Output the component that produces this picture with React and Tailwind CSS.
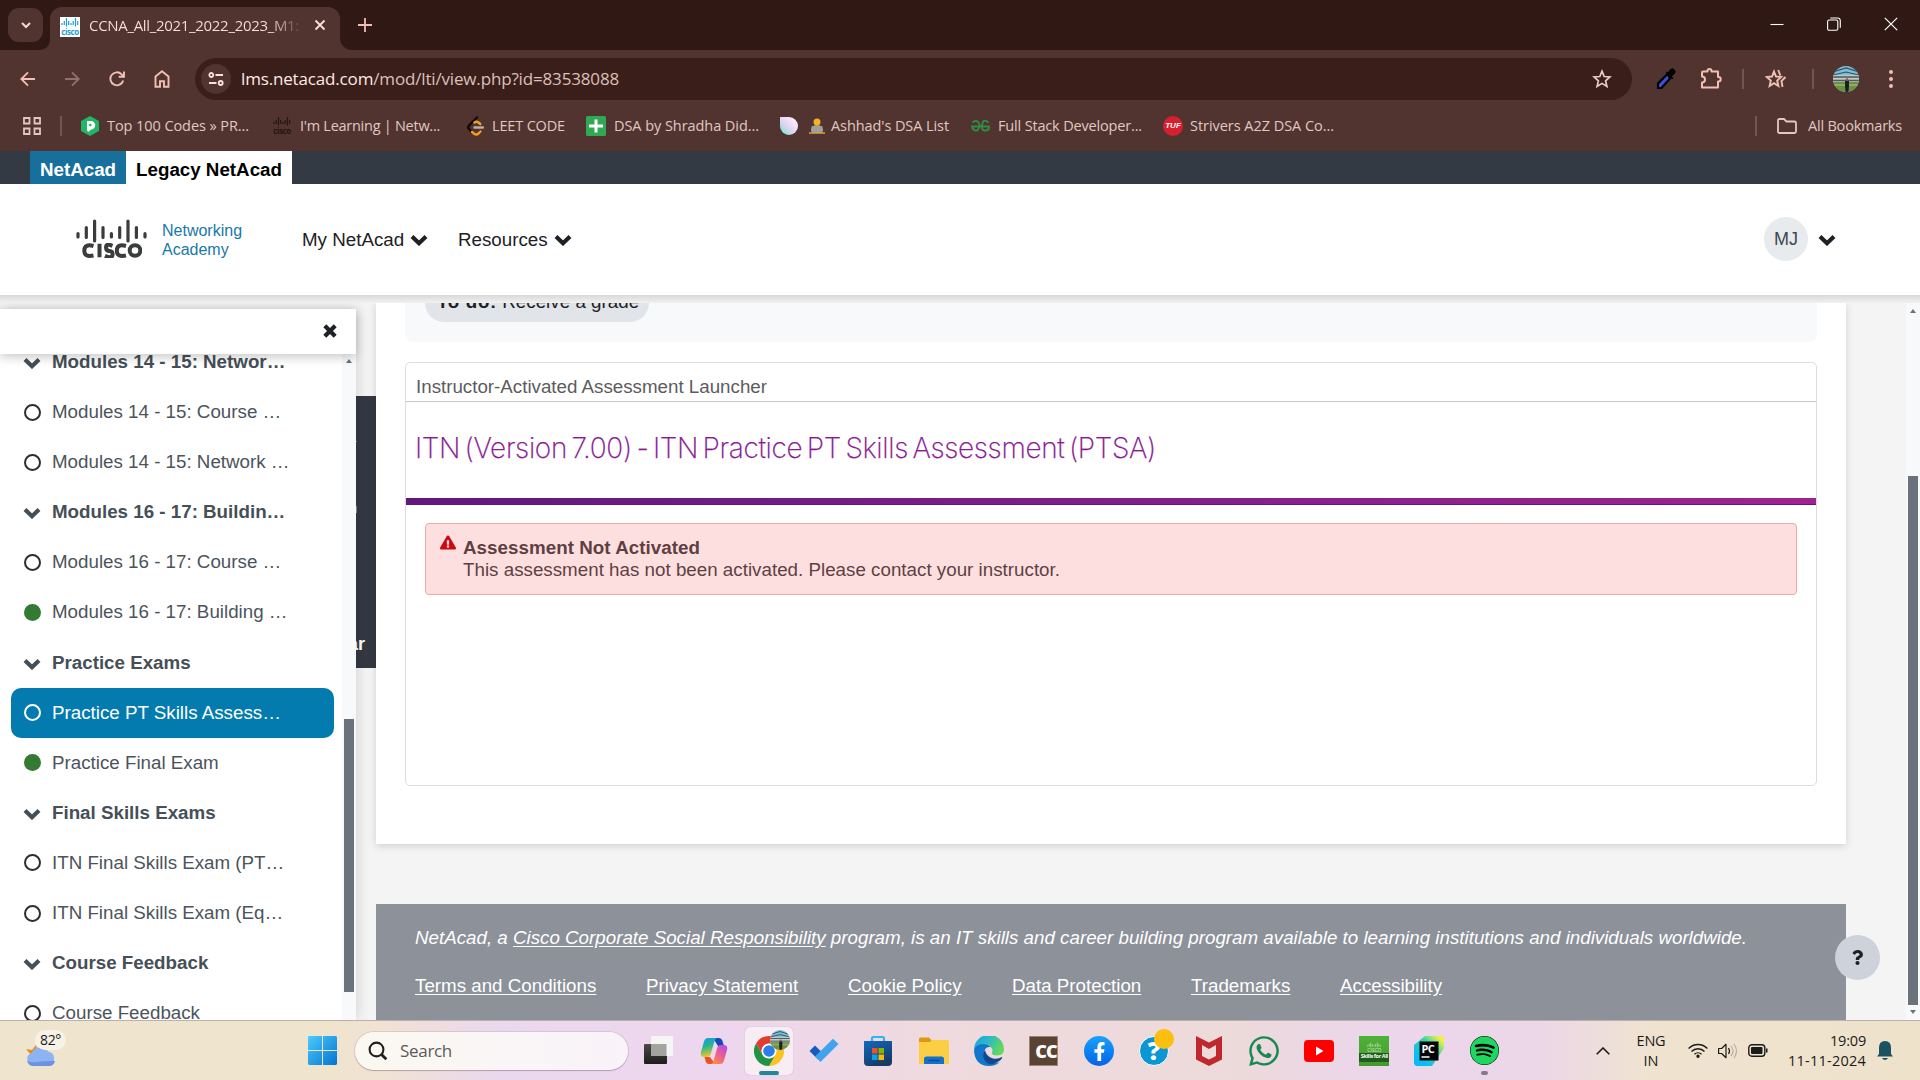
import React, { useLayoutEffect, useRef, useState } from "react";
import { FaExclamationTriangle, FaWhatsapp, FaQuestion, FaSpotify, FaFacebookF } from "react-icons/fa";

/* Single line of text whose letter spacing is computed so that it fills `width` pixels. */
function Fit({ width, className = "", children }) {
  const ref = useRef(null);
  const [spacing, setSpacing] = useState(0);
  useLayoutEffect(() => {
    const natural = ref.current.getBoundingClientRect().width;
    setSpacing((width - natural) / ref.current.textContent.length);
  }, [width]);
  return (
    <span ref={ref} className={`inline-block whitespace-nowrap ${className}`} style={{ letterSpacing: spacing }}>
      {children}
    </span>
  );
}

const Chevron = ({ className }) => (
  <svg viewBox="0 0 18 12" className={`h-3 w-[18px] shrink-0 ${className}`} fill="none" stroke="currentColor" strokeWidth="4.200"><path d="M2 2.500l7 6.700 7-6.700" /></svg>
);

const Cross = ({ className }) => (
  <svg viewBox="0 0 14 14" className={`h-[14px] w-[14px] ${className}`} fill="none" stroke="currentColor" strokeWidth="4.200"><path d="M1.800 1.800l10.400 10.400M12.200 1.800L1.800 12.200" /></svg>
);

const Bars = ({ className }) => (
  <svg viewBox="0 0 71 24" className={className} stroke="currentColor" strokeWidth="3.200" strokeLinecap="round" fill="none">
    <path d="M2 14.500v3.500M10.300 8.500v10M18.600 2v20M27 8.500v10M35.400 14.500v3.500M43.700 8.500v10M52 2v20M60.400 8.500v10M69 14.500v3.500" />
  </svg>
);

const CiscoMini = ({ className }) => (
  <div className={`flex flex-col items-center justify-center ${className}`}>
    <svg viewBox="0 0 18 9" className="h-[9px] w-[18px]" stroke="currentColor" strokeWidth="1.200"><path d="M1 5v2M3.300 3v4M5.500 0v8.500M7.700 3v4M10 5v2M12.200 3v4M14.500 0v8.500M16.700 3v4" /></svg>
    <span className="font-['Open_Sans',sans-serif] text-[8px] font-bold leading-[9px] tracking-[-0.4px]">cisco</span>
  </div>
);

const Photo = ({ className }) => (
  <svg viewBox="0 0 26 26" className={className}>
    <defs><clipPath id="round"><circle cx="13" cy="13" r="13" /></clipPath></defs>
    <g clipPath="url(#round)">
      <rect width="26" height="26" fill="#7fbcd6" />
      <path d="M0 6L13 2 26 6M0 9L13 6 26 9" stroke="#2f5563" strokeWidth="1.200" fill="none" />
      <rect y="9" width="26" height="7" fill="#c3c9c8" />
      <path d="M0 11h26M0 14.500h26" stroke="#4c5a58" strokeWidth="1.300" />
      <rect y="16" width="26" height="10" fill="#6f8f45" />
      <path d="M0 19h26" stroke="#8fae5c" strokeWidth="2" />
      <circle cx="14" cy="13.500" r="1.300" fill="#8f5f45" />
      <path d="M12 15h4v5l-.6 6h-2.800l-.6-6z" fill="#1b1d22" />
    </g>
  </svg>
);

function TabStrip() {
  return (
    <div className="flex h-[50px] items-end bg-[#301914] pl-2">
      <div className="mb-2 flex h-[34px] w-[35px] items-center justify-center rounded-[11px] bg-[#51342f] text-[#f7dad3]">
        <svg viewBox="0 0 12 12" className="h-3 w-3" fill="none" stroke="currentColor" strokeWidth="2"><path d="M2 4l4 4 4-4" /></svg>
      </div>
      <svg viewBox="0 0 10 10" className="-ml-[3px] h-[10px] w-[10px] text-[#51342f]" fill="currentColor"><path d="M10 0v10H0A10 10 0 0 0 10 0z" /></svg>
      <div className="flex h-[43px] w-[290px] items-center rounded-t-[12px] bg-[#51342f] pl-[10px] pb-[7px]">
        <div className="mt-[3px] h-5 w-5 bg-white text-[#1ba0d7]"><CiscoMini className="h-5 w-5" /></div>
        <div className="ml-[9px] w-[213px] overflow-hidden bg-linear-to-r from-[#f9e1dc] from-85% to-[#5b3e39] to-100% bg-clip-text font-['Open_Sans',sans-serif] text-[15px] leading-5 text-transparent">
          <Fit width={210}>CCNA_All_2021_2022_2023_M1:</Fit>
        </div>
        <svg viewBox="0 0 12 12" className="ml-[12px] h-3 w-3 text-[#f9e1dc]" fill="none" stroke="currentColor" strokeWidth="1.800"><path d="M1.500 1.500l9 9M10.500 1.500l-9 9" /></svg>
      </div>
      <svg viewBox="0 0 12 12" className="h-3 w-3 text-[#51342f]" fill="currentColor"><path d="M0 0v12h12A12 12 0 0 1 0 0z" /></svg>
      <svg viewBox="0 0 14 14" className="mb-[18px] ml-[6px] h-[14px] w-[14px] text-[#f2bfb4]" fill="none" stroke="currentColor" strokeWidth="1.800"><path d="M7 0v14M0 7h14" /></svg>
      <div className="mb-[19px] ml-auto mr-[22px] flex items-center gap-[43px] text-white">
        <svg viewBox="0 0 14 14" className="h-[14px] w-[14px]" stroke="currentColor" strokeWidth="1.100"><path d="M.5 7.500h13" /></svg>
        <svg viewBox="0 0 14 14" className="h-[14px] w-[14px]" fill="none" stroke="currentColor" strokeWidth="1.100"><rect x=".6" y="3" width="10.200" height="10.300" rx="1.500" /><path d="M3.300 1h7.200a2.800 2.800 0 0 1 2.800 2.800v7" /></svg>
        <svg viewBox="0 0 14 14" className="h-[14px] w-[14px]" fill="none" stroke="currentColor" strokeWidth="1.200"><path d="M.8.8l12.400 12.400M13.200.8L.8 13.200" /></svg>
      </div>
    </div>
  );
}

const Star = ({ className }) => (
  <svg viewBox="0 0 20 20" className={className} fill="none" stroke="currentColor" strokeWidth="1.700"><path d="M10 2.200l2.200 5.300 5.700.5-4.300 3.800 1.300 5.600L10 14.400l-4.900 3 1.300-5.600L2.100 8l5.700-.5z" /></svg>
);

function Toolbar() {
  return (
    <div className="flex h-[58px] items-center bg-[#51342f] text-[#f2bfb4]">
      <svg viewBox="0 0 16 16" className="ml-5 h-4 w-4" fill="none" stroke="currentColor" strokeWidth="1.800"><path d="M15 8H1.500M8 1.300L1.300 8 8 14.700" /></svg>
      <svg viewBox="0 0 16 16" className="ml-[28px] h-4 w-4 text-[#92716a]" fill="none" stroke="currentColor" strokeWidth="1.800"><path d="M1 8h13.500M8 1.300L14.700 8 8 14.700" /></svg>
      <svg viewBox="0 0 16 16" className="ml-[29px] h-4 w-4" fill="none" stroke="currentColor" strokeWidth="1.900"><path d="M14.200 9.500A6.500 6.500 0 1 1 12.600 3.300L14.500 5.200M15 .5v5.300H9.700" /></svg>
      <svg viewBox="0 0 16 18" className="ml-[29px] h-[18px] w-4" fill="none" stroke="currentColor" strokeWidth="1.900"><path d="M1.500 6.500L8 1.300l6.500 5.200v10.300H10v-5.500H6v5.500H1.500z" /></svg>
      <div className="ml-[25px] flex h-[42px] w-[1437px] items-center rounded-full bg-[#3a1e1a] pl-[6px]">
        <div className="flex h-[30px] w-[30px] items-center justify-center rounded-full bg-[#51342f] text-[#f9e1dc]">
          <svg viewBox="0 0 16 16" className="h-4 w-4" fill="none" stroke="currentColor" strokeWidth="1.800"><circle cx="3.300" cy="4" r="2" /><path d="M7.500 4H15M1 12h7.500" /><circle cx="12.700" cy="12" r="2" /></svg>
        </div>
        <div className="ml-[10px] w-[1351px] font-['Open_Sans',sans-serif] text-[17px] leading-6 text-[#dcc0b9]">
          <Fit width={378}><span className="text-[#fdeae6]">lms.netacad.com</span>/mod/lti/view.php?id=83538088</Fit>
        </div>
        <Star className="h-5 w-5 shrink-0 text-[#e6cdc7]" />
      </div>
      <svg viewBox="0 0 20 22" className="ml-6 h-[22px] w-5"><path d="M2 20v-4.500L11.500 6l3.500 3.500L5.500 20z" fill="#3b50d8" stroke="#000" strokeWidth="2.200" /><path d="M10 4l2 1.200 2.500-3.700q2.500-1.500 4 .5t-.5 4L15.500 8.500 17 11z" fill="#000" stroke="#000" /><path d="M10.500 6l2.500 5 2-2z" fill="#000" /></svg>
      <svg viewBox="0 0 22 22" className="ml-[24px] h-[22px] w-[22px]" fill="none" stroke="currentColor" strokeWidth="2"><path d="M3 3.500h4.500V3a2 2 0 0 1 4 0v.5H18V9h.5a2.200 2.200 0 0 1 0 4.400H18v6.100H2v-5a3 3 0 0 0 0-6v-4q0-1 1-1z" strokeLinejoin="round" /></svg>
      <div className="ml-[20px] h-5 w-[2px] bg-[#76534c]" />
      <svg viewBox="0 0 22 20" className="ml-[21px] h-5 w-[22px]" fill="none" stroke="currentColor" strokeWidth="1.900"><path d="M9 2.500l2 5 5.200.5-4 3.500 1.200 5.500L9 14.200 4.600 17l1.200-5.500-4-3.500L7 7.500zM13.200 1l2.200 5.500M20.500 8l-4 4 1 6" /></svg>
      <div className="ml-[25px] h-5 w-[2px] bg-[#76534c]" />
      <Photo className="ml-[19px] h-[26px] w-[26px]" />
      <div className="ml-[30px] flex flex-col gap-[3px]"><i className="h-1 w-1 rounded-full bg-[#f2bfb4]" /><i className="h-1 w-1 rounded-full bg-[#f2bfb4]" /><i className="h-1 w-1 rounded-full bg-[#f2bfb4]" /></div>
    </div>
  );
}

const Bookmark = ({ icon, text, width, className }) => (
  <div className={`flex shrink-0 items-center ${className}`}>
    {icon}
    <Fit width={width}>{text}</Fit>
  </div>
);

function Bookmarks() {
  return (
    <div className="flex h-[43px] items-center bg-[#51342f] pb-[8px] font-['Open_Sans',sans-serif] text-[14.5px] leading-5 text-[#e0c8c2]">
      <svg viewBox="0 0 18 18" className="ml-[23px] mr-[19px] h-[18px] w-[18px]" fill="none" stroke="currentColor" strokeWidth="1.800"><path d="M1 1h5.500v5.500H1zM11.500 1H17v5.500h-5.500zM1 11.500h5.500V17H1zM11.500 11.500H17V17h-5.500z" /></svg>
      <div className="h-5 w-[2px] bg-[#76534c]" />
      <Bookmark className="ml-[19px] w-[191px] gap-[8px]" width={142} text="Top 100 Codes » PR..." icon={
        <svg viewBox="0 0 18 20" className="h-5 w-[18px]"><path d="M9 0l9 5v10l-9 5-9-5V5z" fill="#22b565" /><path d="M6 5h4a4 4 0 0 1 0 8.500L7.500 16 6 14.500z" fill="#fff" /><circle cx="9.300" cy="9" r="1.300" fill="#22b565" /></svg>} />
      <Bookmark className="w-[195px] gap-2" width={140} text="I'm Learning | Netw..." icon={<CiscoMini className="h-5 w-5 text-[#241512]" />} />
      <Bookmark className="w-[119px] gap-2" width={73} text="LEET CODE" icon={
        <svg viewBox="0 0 17 20" className="h-5 w-[17px]" fill="none" strokeWidth="2.400" strokeLinecap="round"><path d="M10 1.500L2 9.500q-1.500 1.700 0 3.500l3 3.500" stroke="#100a09" /><path d="M5 16l2.500 2q2 1.300 4-.5l2-2M7.500 6.500q2-1.500 4 0l1.800 1.500" stroke="#f5a11a" /><path d="M7.500 11.500H16" stroke="#b9b1ae" /></svg>} />
      <Bookmark className="w-[194px] gap-2" width={145} text="DSA by Shradha Did..." icon={
        <svg viewBox="0 0 20 20" className="h-5 w-5"><rect width="20" height="20" rx="1.500" fill="#31a853" /><path d="M8.500 3.500h3v5H17v3h-5.500v5h-3v-5H3v-3h5.500z" fill="#fff" /></svg>} />
      <Bookmark className="w-[191px]" width={118} text="Ashhad's DSA List" icon={
        <>
          <div className="h-[18px] w-[18px] rounded-full rounded-tl-none bg-linear-to-tr from-[#55e0cc] via-[#e9d5f5] to-white" />
          <svg viewBox="0 0 16 16" className="ml-[11px] mr-[6px] h-4 w-4"><circle cx="8" cy="4" r="3.500" fill="#f3b125" /><path d="M2 13q0-6 6-6t6 6z" fill="#e8a33a" /><rect x="2.500" y="8" width="11" height="7" rx="1" fill="#9aa1a6" /><path d="M0 15h16" stroke="#d8a03c" strokeWidth="1.500" /></svg>
        </>} />
      <Bookmark className="w-[192px] gap-[8px]" width={144} text="Full Stack Developer..." icon={
        <svg viewBox="0 0 19 12" className="h-3 w-[19px]" fill="none" stroke="#2f8d46" strokeWidth="1.800"><path d="M1.500 2.500Q4.500-.5 7 2t1 6-4 2.500T1 6.500h17Q18.500 10 15 10.500T11 8t1-6 5.500.5" /></svg>} />
      <Bookmark className="gap-[7px]" width={144} text="Strivers A2Z DSA Co..." icon={
        <div className="flex h-5 w-5 items-center justify-center rounded-full bg-[#d6202f] font-['Liberation_Sans',sans-serif] text-[8px] font-bold italic text-white">TUF</div>} />
      <div className="ml-auto h-5 w-[2px] bg-[#76534c]" />
      <svg viewBox="0 0 20 16" className="ml-5 mr-[11px] h-4 w-5" fill="none" stroke="currentColor" strokeWidth="1.800"><path d="M1 13.500v-11Q1 1 2.500 1H7l2.500 2.500h8Q19 3.500 19 5v8.500q0 1.500-1.500 1.500h-15Q1 15 1 13.500z" /></svg>
      <Fit width={94} className="mr-[18px]">All Bookmarks</Fit>
    </div>
  );
}

function SiteHeader() {
  return (
    <>
      <div className="flex h-[33px] items-center bg-[#343a43] pl-[30px] text-[18.75px] font-bold leading-[33px]">
        <div className="h-[33px] w-[96px] bg-[#176f9c] pt-[2px] text-center text-white">NetAcad</div>
        <div className="h-[33px] w-[166px] bg-white pt-[2px] text-center text-black">Legacy NetAcad</div>
      </div>
      <div className="flex h-[111px] items-center bg-white text-[#1d2125]">
        <div className="-mt-[2px] ml-[76px] flex w-[71px] flex-col items-center text-[#3b3c3d]">
          <Bars className="h-6 w-[71px]" />
          <svg viewBox="0 0 60 15" className="h-[15px] w-[60px]" fill="none" stroke="currentColor" strokeWidth="4">
            <path d="M11.500 3Q2.500.5 2.300 7.500T11.500 12.500M17.500.8v13.400M30.500 2.800Q24-.0 24 4t3.500 4 3 4-7.500.8M44 3Q35 .5 34.800 7.500T44 12.500" />
            <circle cx="53" cy="7.500" r="5.300" />
          </svg>
        </div>
        <div className="ml-[15px] w-[140px] text-[16px] leading-[19px] text-[#1878a8]"><div>Networking</div><div>Academy</div></div>
        <div className="flex w-[156px] items-center text-[18.75px] leading-7"><span>My NetAcad</span><Chevron className="ml-[6px]" /></div>
        <div className="flex items-center text-[18.75px] leading-7"><span>Resources</span><Chevron className="ml-[6px]" /></div>
        <div className="-mt-[1px] ml-auto flex h-11 w-11 items-center justify-center rounded-full bg-[#e7ebee] text-[18px] text-[#3f474e]">MJ</div>
        <Chevron className="ml-[10px] mr-[84px]" />
      </div>
    </>
  );
}

const ROWS = [
  ["head", "Modules 14 - 15: Networ…"],
  ["open", "Modules 14 - 15: Course …"],
  ["open", "Modules 14 - 15: Network …"],
  ["head", "Modules 16 - 17: Buildin…"],
  ["open", "Modules 16 - 17: Course …"],
  ["done", "Modules 16 - 17: Building …"],
  ["head", "Practice Exams"],
  ["active", "Practice PT Skills Assess…"],
  ["done", "Practice Final Exam"],
  ["head", "Final Skills Exams"],
  ["open", "ITN Final Skills Exam (PT…"],
  ["open", "ITN Final Skills Exam (Eq…"],
  ["head", "Course Feedback"],
  ["open", "Course Feedback"],
];

function Row({ kind, text }) {
  const tone = kind === "active" ? "bg-[#037bae] text-white" : kind === "head" ? "font-bold text-[#464f57]" : "text-[#4b545c]";
  return (
    <div className={`ml-[11px] flex h-[50.1px] w-[323px] items-center rounded-[10px] pl-[12px] text-[18.75px] ${tone}`}>
      <span className="flex w-[29px] items-center">
        {kind === "head" && <Chevron className="mt-[2px]" />}
        {kind === "open" && <i className="ml-[0.5px] h-[17px] w-[17px] rounded-full border-2 border-[#2b2f34]" />}
        {kind === "active" && <i className="ml-[0.5px] h-[17px] w-[17px] rounded-full border-2 border-white" />}
        {kind === "done" && <i className="ml-[0.5px] h-[17px] w-[17px] rounded-full bg-[#357a32]" />}
      </span>
      <span className="whitespace-nowrap">{text}</span>
    </div>
  );
}

const Arrow = ({ down }) => (
  <svg viewBox="0 0 6 4" className={`h-1 w-[6px] ${down ? "rotate-180" : ""}`} fill="#6a737b"><path d="M3 0l3 4H0z" /></svg>
);

function Sidebar() {
  return (
    <div className="relative z-10 mt-[6px] flex h-[711px] w-[356px] shrink-0 flex-col bg-white shadow-[2px_0_12px_rgba(0,0,0,0.12)]">
      <div className="relative z-10 flex h-[45px] shrink-0 items-center justify-end bg-white pr-[19px] text-[#1d2125] shadow-[0_3px_10px_rgba(0,0,0,0.22)]">
        <Cross className="-mt-[2px]" />
      </div>
      <div className="flex h-[666px] overflow-hidden">
        <div className="-mt-[17px] w-[342px] shrink-0">
          {ROWS.map(([kind, text], i) => <Row key={i} kind={kind} text={text} />)}
        </div>
        <div className="flex w-[14px] flex-col items-center bg-[#f8f9fb] pt-[5px]">
          <Arrow />
          <div className="mt-[356px] h-[273px] w-[10px] bg-[#6a737b]" />
        </div>
      </div>
    </div>
  );
}

function Launcher() {
  return (
    <div className="mt-[20px] h-[424px] rounded-[5px] border border-[#dcdee1] bg-white">
      <div className="h-[39px] border-b border-[#c8c8c8] pl-[10px] pt-[11px] text-[18.75px] leading-[26px] text-[#5c5c5e]"><Fit width={351}>Instructor-Activated Assessment Launcher</Fit></div>
      <div className="h-[96px] pl-[9px] pt-[27px] font-['Inter',sans-serif] text-[28px] font-extralight leading-[38px] text-[#8b1a90]">
        <Fit width={741} className="[word-spacing:-3px] [-webkit-text-stroke:0.25px_#8b1a90]">ITN (Version 7.00) - ITN Practice PT Skills Assessment (PTSA)</Fit>
      </div>
      <div className="h-[7px] border-b border-[#62187f] bg-linear-to-r from-[#62187f] to-[#9f2294]" />
      <div className="mx-[19px] mt-[18px] flex h-[72px] rounded-[4px] border border-[#f0a9a3] bg-[#fddfe0] pl-[14px] pt-[11px] text-[#5f3f42]">
        <FaExclamationTriangle className="h-[15px] w-4 text-[#cf0a0f]" />
        <div className="ml-[7px] mt-[2px] text-[18.75px] leading-[22px]">
          <div className="font-bold"><Fit width={237}>Assessment Not Activated</Fit></div>
          <div><Fit width={597}>This assessment has not been activated. Please contact your instructor.</Fit></div>
        </div>
      </div>
    </div>
  );
}

const LINKS = [
  ["Terms and Conditions", "w-[231px]"],
  ["Privacy Statement", "w-[202px]"],
  ["Cookie Policy", "w-[164px]"],
  ["Data Protection", "w-[179px]"],
  ["Trademarks", "w-[149px]"],
  ["Accessibility", "w-[140px]"],
];

function Content() {
  return (
    <div className="flex w-[1470px] shrink-0 flex-col">
      <div className="h-[541px] shrink-0 overflow-hidden bg-white px-[29px] shadow-[0_2px_8px_rgba(0,0,0,0.15)]">
        <div className="flex h-[39px] flex-col items-start justify-end rounded-b-[8px] bg-[#f8f9fb] pb-5 pl-5">
          <div className="flex h-[19px] w-[224px] items-end overflow-hidden rounded-b-[19px] bg-[#e1e4e9] pb-[8px] pl-[12px] text-[18.75px] leading-6 text-[#1d2125]">
            <span className="whitespace-nowrap"><b><Fit width={60}>To do:</Fit></b> <Fit width={137}>Receive a grade</Fit></span>
          </div>
        </div>
        <Launcher />
      </div>
      <div className="mt-[60px] h-[116px] bg-[#8d9199] pl-[39px] pt-[21px] text-[18.75px] leading-[26px] text-white">
        <div className="italic"><Fit width={1332}>NetAcad, a <span className="underline underline-offset-2">Cisco Corporate Social Responsibility</span> program, is an IT skills and career building program available to learning institutions and individuals worldwide.</Fit></div>
        <div className="mt-[22px] flex">{LINKS.map(([t, w]) => <span key={t} className={`whitespace-nowrap ${w}`}><span className="underline underline-offset-2">{t}</span></span>)}</div>
      </div>
    </div>
  );
}

const TaskView = () => (<svg viewBox="0 0 32 32" className="mb-[2px] mr-[2px] h-8 w-8"><defs><linearGradient id="tv" x2="0" y2="1"><stop stopColor="#4a4a48" /><stop offset="1" stopColor="#1d1d1c" /></linearGradient></defs><rect x="2" y="10" width="23" height="20" rx="1" fill="url(#tv)" /><rect x="9" y="2" width="22" height="20" rx="1" fill="#f5f5f5" /><path d="M9 10h15.500v12H9z" fill="#a3a39f" /></svg>);
const Copilot = () => (
  <svg viewBox="0 0 28 28" className="h-7 w-7">
    <defs>
      <linearGradient id="cpa" x2=".2" y2="1"><stop stopColor="#0f9ae8" /><stop offset=".5" stopColor="#2bb58d" /><stop offset="1" stopColor="#e6c72a" /></linearGradient>
      <linearGradient id="cpb" x1="1" x2=".3" y2="1"><stop stopColor="#a04df0" /><stop offset=".5" stopColor="#e75a9c" /><stop offset="1" stopColor="#fb8a4a" /></linearGradient>
    </defs>
    <path d="M13 1h6q2.500 0 3.300 2.500L24 9h-6z" fill="#1748b8" />
    <path d="M8 1h9q-2 1-2.800 4l-3.400 12q-.8 3-3.800 3H4.500Q-.2 20 1 15L4 4.500Q5 1 8 1z" fill="url(#cpa)" />
    <path d="M15 27H9q-2.500 0-3.300-2.500L4.500 20H10z" fill="#e8502e" />
    <path d="M20 27h-9q2-1 2.800-4l3.400-12q.8-3 3.800-3h2.500q4.700 0 3.500 5L24 23.500Q23 27 20 27z" fill="url(#cpb)" />
  </svg>);
const Chrome = () => (
  <div className="relative flex h-12 w-12 items-center justify-center rounded-[5px] bg-[#f8edf5] shadow-[0_0_1px_rgba(0,0,0,0.3)]">
    <svg viewBox="0 0 30 30" className="h-[30px] w-[30px]"><path d="M15 0a15 15 0 0 1 13 7.500H15A7.500 7.500 0 0 0 8.500 18.700L2 7.500A15 15 0 0 1 15 0z" fill="#e33b2e" /><path d="M28 7.500A15 15 0 0 1 15 30l6.500-11.300A7.500 7.500 0 0 0 15 7.500z" fill="#fcc31e" /><path d="M2 7.500A15 15 0 0 0 15 30l6.500-11.300a7.500 7.500 0 0 1-13 0z" fill="#229342" /><circle cx="15" cy="15" r="7.300" fill="#fff" /><circle cx="15" cy="15" r="5.800" fill="#2b7de9" /></svg>
    <Photo className="absolute right-[3px] top-[3px] h-5 w-5" />
    <i className="absolute bottom-0 h-1 w-5 rounded-full bg-[#24869b]" />
  </div>);
const Todo = () => (<svg viewBox="0 0 32 26" className="h-[26px] w-8"><path d="M1.500 13L7 7.500l8 8-5.500 5.500z" fill="#195abd" /><path d="M7 18.500L25 .8 30.500 6 12.500 24z" fill="#3fa3ee" /></svg>);
const Store = () => (<svg viewBox="0 0 30 32" className="mr-[2px] h-8 w-[30px]"><defs><linearGradient id="st" x2=".5" y2="1"><stop stopColor="#1169c0" /><stop offset="1" stopColor="#183a66" /></linearGradient></defs><path d="M9 7V3.500Q9 2 10.500 2h9Q21 2 21 3.500V7" fill="none" stroke="#2cb5ee" strokeWidth="2.200" /><path d="M1 6h28v21q0 4-4 4H5q-4 0-4-4z" fill="url(#st)" /><path fill="#f25022" d="M9 13h5.500v5.500H9z" /><path fill="#7fba00" d="M15.500 13H21v5.500h-5.500z" /><path fill="#00a4ef" d="M9 19.500h5.500V25H9z" /><path fill="#ffb900" d="M15.500 19.500H21V25h-5.500z" /></svg>);
const Explorer = () => (<svg viewBox="0 0 30 28" className="h-7 w-[30px]"><path d="M0 2q0-1.500 1.500-1.500H10L13 4v4H0z" fill="#d99a10" /><path d="M0 5h11l2-2h15.500Q30 3 30 4.500V27H0z" fill="#fbce44" /><path d="M5 27v-5q0-2.500 2.500-2.500h15Q25 19.500 25 22v5z" fill="#1271cb" /><path d="M9.500 23.500h11" stroke="#0a4c92" strokeWidth="1.500" /></svg>);
const Edge = () => (
  <svg viewBox="0 0 30 30" className="h-[30px] w-[30px]">
    <defs><linearGradient id="eg" x2="1" y2=".4"><stop stopColor="#1b9fe0" /><stop offset=".5" stopColor="#2bb8c9" /><stop offset="1" stopColor="#62d85c" /></linearGradient></defs>
    <path d="M0 14.500A15 15 0 0 1 30 13q0 6.500-7 6.500-5.500 0-5-3 1-2 0-4-3-5-9-3.500T0 14.500z" fill="url(#eg)" />
    <path d="M0 15Q1.500 8 9 8q5 0 7.500 3-5-.5-6 4-1 8 7 11.500 4 1.500 8-.5Q22 30 15 30 1 29.500 0 15z" fill="#1276ca" />
    <path d="M11 14q-4 7 1 12t14-1.500q3-3 2-3.500-4 2.500-9 1.500-7-2-8-8.500z" fill="#10498f" />
  </svg>);
const CC = () => (<div className="flex h-[30px] w-[29px] items-center justify-center border border-[#9a8676] bg-[#5a4332] pl-1 font-['Open_Sans',sans-serif] text-[18px] font-extrabold leading-none tracking-[-1px] text-white">CC</div>);
const Fb = () => (<div className="flex h-[30px] w-[30px] items-end justify-center rounded-full bg-linear-to-b from-[#1da1f9] to-[#0a62e8] pb-[5px] text-white"><FaFacebookF className="h-[19px] w-[19px]" /></div>);
const Help = () => (
  <div className="relative flex h-[30px] w-[30px] items-center justify-center rounded-full border-[1.5px] border-white bg-[#0d96d4] font-['Open_Sans',sans-serif] text-[25px] font-extrabold leading-none text-white">?
    <i className="absolute -right-[6px] -top-[8px] h-5 w-5 rounded-full bg-[#fdbf0f]" />
  </div>);
const McAfee = () => (<svg viewBox="0 0 26 30" className="h-[30px] w-[26px]"><path d="M0 0l13 6.500L26 0v23.500L13 30 0 23.500zM6 9v11l7 3.500 7-3.500V9l-7 4z" fill="#c0282d" fillRule="evenodd" /></svg>);
const YouTube = () => (<svg viewBox="0 0 30 22" className="h-[22px] w-[30px]"><rect width="30" height="22" rx="4" fill="#fe0000" /><path d="M12 6.500l7.500 4.500-7.500 4.500z" fill="#fff" /></svg>);
const Skills = () => (<div className="flex h-[30px] w-[30px] flex-col items-center overflow-hidden bg-linear-to-b from-[#4fb338] to-[#45982f] pt-[6px] text-[#d8efd0]"><Bars className="h-[6px] w-[14px] shrink-0" /><span className="text-[5px] leading-[5px]">CISCO</span><span className="flex h-[9px] w-full items-center justify-center bg-[#1d5c1a] text-[5.5px] font-bold leading-none text-white"><Fit width={27}>Skills for All</Fit></span></div>);
const PyCharm = () => (
  <div className="relative">
    <svg viewBox="0 0 30 30" className="h-[30px] w-[30px]">
      <defs><linearGradient id="py" x1="0" y1="1" x2="1" y2="0"><stop offset=".2" stopColor="#07bdf8" /><stop offset=".6" stopColor="#2fd3a5" /><stop offset=".9" stopColor="#f3ee4e" /></linearGradient></defs>
      <path d="M0 9L11 0h18q1 0 1 1v11L18 30H2l-2-2z" fill="url(#py)" /><rect x="5.500" y="5.500" width="19" height="19" fill="#060606" /><path d="M7.500 21h8" stroke="#fff" strokeWidth="1.500" />
    </svg>
    <span className="absolute left-[7px] top-[7px] text-[11px] font-bold leading-none tracking-[-0.5px] text-white">PC</span>
  </div>);
const Spotify = () => (<div className="relative flex flex-col items-center"><div className="flex h-[29px] w-[29px] rounded-full bg-black"><FaSpotify className="h-[29px] w-[29px] text-[#1ed760]" /></div><i className="absolute -bottom-[10px] h-1 w-[7px] rounded-full bg-[#857d86]" /></div>);
const WhatsApp = () => <FaWhatsapp className="h-[34px] w-[34px] text-[#188a51]" />;

const APPS = [TaskView, Copilot, Chrome, Todo, Store, Explorer, Edge, CC, Fb, Help, McAfee, WhatsApp, YouTube, Skills, PyCharm, Spotify];

function Taskbar() {
  return (
    <div className="flex h-[60px] shrink-0 items-center border-t border-[#bcb0aa] bg-[linear-gradient(90deg,#efe4cd_0%,#efe4cd_17%,#f0e2d4_20%,#ead8ee_26%,#eed7ee_38%,#efdadf_48%,#eddada_64%,#ebd6ec_72%,#ecd7e8_80%,#efe3d0_86%,#efe2cb_100%)] font-['Open_Sans',sans-serif] text-[#1b1b1b]">
      <div className="relative ml-[25px] h-[36px] w-[42px]">
        <svg viewBox="0 0 32 24" className="absolute bottom-[2px] left-0 h-6 w-8"><path d="M1 6l6 1 4-5 2 8-6 3z" fill="#f08a17" /><path d="M8 23a7 7 0 0 1-1-13.500 9 9 0 0 1 16-1A7.500 7.500 0 0 1 24 23z" fill="#8db4f2" /><path d="M2 18q4 2 10 1t18-1q-1 5-6 5H8q-4 0-6-5z" fill="#6c93e2" /></svg>
        <div className="absolute -top-[3px] left-[10px] flex h-5 w-[31px] items-center justify-center rounded-full bg-[#f7f1e6] text-[14px] leading-none"><Fit width={21}>82°</Fit></div>
      </div>
      <svg viewBox="0 0 29 29" className="ml-[241px] h-[29px] w-[29px]"><defs><linearGradient id="win" x2="1" y2="1"><stop stopColor="#4ccbfb" /><stop offset="1" stopColor="#0473d2" /></linearGradient></defs><path d="M1 0h13v14H0V1zM15 0h13l1 1v13H15zM0 15h14v14H1l-1-1zM15 15h14v13l-1 1H15z" fill="url(#win)" /></svg>
      <div className="ml-[18px] flex h-[38px] w-[273px] items-center rounded-full bg-linear-to-r from-[#fbf8f1] to-[#f9f3fa] pl-[13px] text-[17px] text-[#5b5a5b] shadow-[0_0_0_1px_rgba(180,160,170,0.35),0_1px_1px_rgba(0,0,0,0.25)]">
        <svg viewBox="0 0 20 20" className="mr-[12px] h-5 w-5" fill="none" stroke="#1f1f1f" strokeWidth="2.100"><circle cx="8.500" cy="8.500" r="6.900" /><path d="M13.500 13.500l4.800 4.800" strokeWidth="2.800" /></svg>
        <Fit width={52} className="mt-[1px]">Search</Fit>
      </div>
      <div className="ml-[3px] flex">{APPS.map((A, i) => <div key={i} className="flex h-12 w-[55.07px] items-center justify-center"><A /></div>)}</div>
      <svg viewBox="0 0 14 8" className="ml-[84px] h-2 w-[14px]" fill="none" stroke="currentColor" strokeWidth="1.600"><path d="M.7 7.300L7 1l6.300 6.300" /></svg>
      <div className="ml-[26px] flex w-[30px] flex-col items-center text-[14.5px] leading-5"><Fit width={29}>ENG</Fit><Fit width={15}>IN</Fit></div>
      <svg viewBox="0 0 20 15" className="ml-[22px] h-[15px] w-5" fill="none" stroke="currentColor" strokeWidth="1.400"><path d="M.6 5.500a13 13 0 0 1 18.800 0M3.500 8.500a9 9 0 0 1 13 0M6.500 11.300a5 5 0 0 1 7 0" /><circle cx="10" cy="13.200" r="1" fill="currentColor" /></svg>
      <svg viewBox="0 0 20 16" className="ml-[10px] h-4 w-5" fill="none" stroke="currentColor" strokeWidth="1.200"><path d="M.6 5.500h3L8 1.300v13.400l-4.400-4.200h-3z" strokeLinejoin="round" /><path d="M10.500 5q2 3 0 6" /><path d="M13 3q4 5 0 10M16 1q5 7 0 14" stroke="#b9ad9c" /></svg>
      <svg viewBox="0 0 20 13" className="ml-[10px] h-[13px] w-5"><rect x=".8" y=".8" width="16" height="11.400" rx="3" fill="none" stroke="currentColor" strokeWidth="1.400" /><rect x="3" y="3" width="11.500" height="7" rx="1" fill="currentColor" /><path d="M18 4.500h1.500v4H18z" fill="currentColor" /></svg>
      <div className="ml-auto flex flex-col items-end text-[14.5px] leading-5"><Fit width={36}>19:09</Fit><Fit width={78}>11-11-2024</Fit></div>
      <svg viewBox="0 0 16 19" className="ml-[11px] mr-[27px] h-[19px] w-4 shrink-0" fill="#1a5260"><path d="M2 13V7q0-7 6-7t6 7v6l2 2.500H0zM5 17h6q-1 2-3 2t-3-2z" /></svg>
    </div>
  );
}

export default function App() {
  return (
    <div className="flex h-[1080px] w-[1920px] flex-col overflow-hidden bg-[#f4f4f4] font-['Liberation_Sans',Arial,sans-serif]">
      <TabStrip />
      <Toolbar />
      <Bookmarks />
      <SiteHeader />
      <div className="h-2 shrink-0 bg-linear-to-b from-[#d9d9d9] to-[#f1f1f1]" />
      <div className="relative flex h-[717px] shrink-0 overflow-hidden">
        <Sidebar />
        <div className="mt-[93px] flex h-[272px] w-5 shrink-0 flex-col items-start bg-[#343842] pt-[45px] text-[18px] font-bold leading-6 text-white">
          <i className="h-px w-px bg-[#8a8d93]" />
          <i className="mt-[64px] h-[7px] w-px bg-[#8a8d93]" />
          <span className="-ml-[8px] mt-[119px]">ar</span>
        </div>
        <Content />
        <div className="ml-auto flex w-[14px] flex-col items-center bg-[#f8f9fb] pt-[6px]">
          <Arrow />
          <div className="mb-[5px] mt-[163px] h-[529px] w-[10px] shrink-0 bg-[#6a737b]" />
          <Arrow down />
        </div>
        <div className="absolute left-[1835px] top-[632px] z-10 flex h-[45px] w-[45px] items-center justify-center rounded-full bg-[#ced2da] text-[#1d2125]">
          <FaQuestion className="h-[15px] w-[15px]" />
        </div>
      </div>
      <Taskbar />
    </div>
  );
}
